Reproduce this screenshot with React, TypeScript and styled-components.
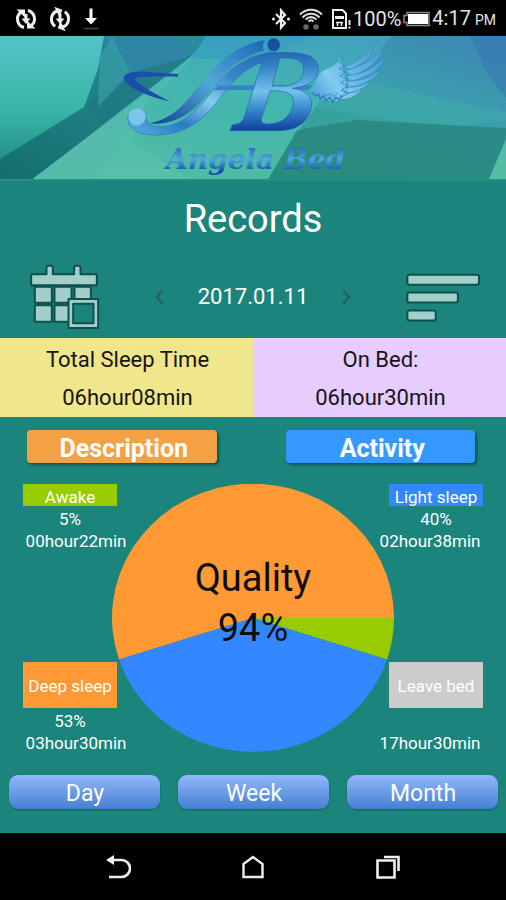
import React from "react";
import styled, { createGlobalStyle } from "styled-components";

const Global = createGlobalStyle`
  * { box-sizing: border-box; }
  body { margin: 0; background: #000; }
  h1, p, dl, dt, dd { margin: 0; font-weight: 400; }
  button { font: inherit; border: 0; padding: 0; background: none; cursor: pointer; }
  svg { display: block; }
`;

const Page = styled.div`
  min-height: 100vh;
  display: flex;
  flex-direction: column;
  background: #1b857c;
  color: #fff;
  font-family: Roboto, "Liberation Sans", sans-serif;
`;

const StatusBar = styled.header`
  display: flex;
  justify-content: space-between;
  align-items: center;
  height: 36px;
  padding: 2px 10px 0 14px;
  background: #000;
  color: #e4e4e4;
  font-size: 20px;
  line-height: 24px;
`;

const StatusGroup = styled.div<{ $gap: number }>`
  display: flex;
  align-items: center;
  gap: ${(p) => p.$gap}px;
`;

const Clock = styled.span`
  display: flex;
  align-items: baseline;
  gap: 4px;
`;

const Meridiem = styled.small`
  font-size: 14px;
`;

const Banner = styled.svg`
  width: 100%;
  height: auto;
`;

const Title = styled.h1`
  padding: 16px 0 15px;
  text-align: center;
  font-size: 38px;
  line-height: 44px;
`;

const Toolbar = styled.div`
  display: flex;
  align-items: center;
  justify-content: space-between;
  height: 82px;
  padding: 0 25px 0 29px;
`;

const IconButton = styled.button`
  display: flex;
  align-items: center;
  justify-content: center;
`;

const DatePicker = styled.div`
  display: flex;
  align-items: center;
  gap: 26px;
  font-size: 22px;
  line-height: 28px;
`;

const StepButton = styled(IconButton)`
  width: 24px;
  height: 32px;
`;

const Totals = styled.dl`
  display: grid;
  grid-template-columns: 1fr 1fr;
  color: #151515;
  font-size: 22px;
  line-height: 38px;
  text-align: center;
`;

const Total = styled.div<{ $color: string }>`
  padding: 3px 0 0 2px;
  background: ${(p) => p.$color};
`;

const Tabs = styled.div`
  display: grid;
  grid-template-columns: 1fr 1fr;
  gap: 69px;
  padding: 13px 31px 0 27px;
`;

const TabButton = styled.button<{ $color: string }>`
  height: 33px;
  padding: 4px 0 0 4px;
  border-radius: 4px;
  background: ${(p) => p.$color};
  box-shadow: 2px 2px 3px rgba(0, 40, 40, 0.55);
  color: #fff;
  font-size: 25px;
  font-weight: 700;
  line-height: 29px;
`;

const Chart = styled.section`
  display: grid;
  margin-top: 21px;
  padding: 0 23px;

  > * {
    grid-area: 1 / 1;
  }
`;

const Pie = styled.svg`
  justify-self: center;
  width: 282px;
  height: 268px;
`;

const Quality = styled.div`
  align-self: start;
  padding-top: 69px;
  text-align: center;
  color: #0c0c0c;
  font-size: 38px;
  line-height: 50px;
`;

const Legends = styled.div`
  display: grid;
  grid-template-columns: 106px 106px;
  justify-content: space-between;
  align-content: space-between;
`;

const Legend = styled.div<{ $side: "left" | "right" }>`
  display: flex;
  flex-direction: column;
  align-items: ${(p) => (p.$side === "left" ? "flex-start" : "flex-end")};
  font-size: 17px;
  line-height: 26px;
  text-align: center;
`;

const Swatch = styled.p<{ $color: string; $tall?: boolean }>`
  width: 94px;
  height: ${(p) => (p.$tall ? 46 : 22)}px;
  line-height: ${(p) => (p.$tall ? 48 : 26)}px;
  background: ${(p) => p.$color};
`;

const Percent = styled.p`
  width: 94px;
  height: 22px;
`;

const Duration = styled.p`
  width: 106px;
  height: 22px;
`;

const Periods = styled.div`
  display: grid;
  grid-template-columns: repeat(3, 1fr);
  gap: 18px;
  padding: 23px 8px 24px 9px;
`;

const PeriodButton = styled.button`
  height: 34px;
  padding: 4px 0 0 1px;
  border-radius: 9px;
  background: linear-gradient(#92b8fb, #4580d2);
  box-shadow: 0 1px 2px rgba(0, 40, 60, 0.4);
  color: #fff;
  font-size: 23px;
  line-height: 30px;
`;

const NavBar = styled.nav`
  display: grid;
  grid-template-columns: repeat(3, 1fr);
  align-items: center;
  height: 67px;
  margin-top: auto;
  padding: 0 51px;
  background: #000;
`;

const SyncIcon = ({ turn }: { turn: number }) => (
  <svg width="24" height="24" viewBox="0 0 24 24" fill="none" stroke="#eee" strokeWidth="3">
    <g transform={`rotate(${turn} 12 12)`}>
      <path d="M10 20.500a8.700 8.700 0 0 1-3.500-15" />
      <path d="M14 3.500a8.700 8.700 0 0 1 3.500 15" />
      <path d="M2.500 2.500h8.500v8z M21.500 21.500h-8.500v-8z" fill="#eee" stroke="none" />
    </g>
    <path d="M12 7v6" />
    <path d="M7.500 11.500h9L12 17z" fill="#eee" stroke="none" />
  </svg>
);

const DownloadIcon = () => (
  <svg width="18" height="24" viewBox="0 0 18 24">
    <path d="M7.500 1.500h3v9.500h4.500L9 17.500 3 11h4.500z" fill="#fff" />
    <path d="M1.500 21.500h15" stroke="#444" strokeWidth="1.500" />
  </svg>
);

const BluetoothIcon = () => (
  <svg width="20" height="24" viewBox="0 0 20 24" fill="none" stroke="#eee" strokeWidth="2.200">
    <path d="M5 7l9 9-4 4.500V3.500L14 8l-9 9" />
    <circle cx="2.500" cy="12" r="1.500" fill="#eee" stroke="none" />
    <circle cx="17.500" cy="12" r="1.500" fill="#eee" stroke="none" />
  </svg>
);

const WifiIcon = () => (
  <svg width="24" height="24" viewBox="0 0 24 24" fill="none" stroke="#ddd" strokeWidth="2">
    <path d="M1 7.500C7 1 17 1 23 7.500M3.500 10.500c5-5 12-5 17 0M6.500 12.500c3.500-3 7.500-3 11 0M9.500 14.500c1.500-1.500 3.500-1.500 5 0" />
    <circle cx="7" cy="20" r="2.800" fill="#666" stroke="none" />
    <circle cx="17" cy="20" r="2.800" fill="#666" stroke="none" />
  </svg>
);

const SimIcon = () => (
  <svg width="20" height="24" viewBox="0 0 20 24" fill="none" stroke="#eee" strokeWidth="2">
    <path d="M2 3h9.500L15 6.500V21H2z" />
    <path d="M4 10.500h9" strokeWidth="3" />
    <path d="M5 15.500h7M6.500 15v4M10.500 15v4" strokeWidth="1.500" />
    <path d="M18.500 13v5M18.500 19.500v2" />
  </svg>
);

const BatteryIcon = () => (
  <svg width="27" height="16" viewBox="0 0 27 16">
    <path d="M4 1.500h22v13H4v-3H1v-7h3z" fill="none" stroke="#8a8a8a" strokeWidth="1.500" />
    <path d="M5 3h20v10H5z" fill="#fff" />
  </svg>
);

const CalendarIcon = () => (
  <svg width="71" height="66" viewBox="88 42 212 198">
    <g fill="#a3cfcb" stroke="#0f4f4d" strokeWidth="6" strokeLinejoin="round">
      <path d="M94 73h46V53q0-6 6-6h7q6 0 6 6v20h64V53q0-6 6-6h7q6 0 6 6v20h49v33H94z" />
      <path d="M105 110h51v48h-51zM164 110h51v48h-51zM224 110h49v48h-49zM105 166h51v49h-51zM164 166h51v49h-51z" />
      <path d="M206 147h89v87h-89z" />
      <path d="M220 161h61v59h-61z" fill="#1b857c" />
    </g>
  </svg>
);

const SortIcon = () => (
  <svg width="75" height="49" viewBox="460 65 224 146">
    <g fill="#a3cfcb" stroke="#0f4f4d" strokeWidth="6">
      <rect x="464" y="70" width="214" height="30" rx="7" />
      <rect x="464" y="123" width="151" height="30" rx="7" />
      <rect x="464" y="177" width="85" height="30" rx="7" />
    </g>
  </svg>
);

const Chevron = ({ d }: { d: string }) => (
  <svg width="10" height="16" viewBox="0 0 10 16" fill="none" stroke="#2a5f60" strokeWidth="2.200">
    <path d={d} />
  </svg>
);

const BrandBanner = () => (
  <Banner viewBox="0 0 506 145" role="img" aria-label="Angela Bed">
    <defs>
      <linearGradient id="sky" x1="0" y1="0" x2="0" y2="1">
        <stop offset="0" stopColor="#55c2c8" />
        <stop offset="0.5" stopColor="#3ab6a6" />
        <stop offset="1" stopColor="#1b8279" />
      </linearGradient>
      <linearGradient id="shade" x1="0.8" y1="0" x2="0.1" y2="1">
        <stop offset="0" stopColor="#2b8a9c" />
        <stop offset="0.5" stopColor="#1f7f84" />
        <stop offset="1" stopColor="#14706c" />
      </linearGradient>
      <linearGradient id="mint" x1="0.8" y1="0" x2="0.3" y2="1">
        <stop offset="0" stopColor="#429fc0" />
        <stop offset="0.45" stopColor="#42b5b0" />
        <stop offset="1" stopColor="#50bca4" />
      </linearGradient>
      <linearGradient id="east" x1="0.9" y1="0" x2="0.3" y2="1">
        <stop offset="0" stopColor="#3b80b2" />
        <stop offset="0.45" stopColor="#389aa8" />
        <stop offset="1" stopColor="#2c9a88" />
      </linearGradient>
      <linearGradient id="metal" x1="0" y1="0" x2="0" y2="1">
        <stop offset="0" stopColor="#2468b4" />
        <stop offset="0.2" stopColor="#3787c8" />
        <stop offset="0.5" stopColor="#74c0ec" />
        <stop offset="0.7" stopColor="#3a90d0" />
        <stop offset="1" stopColor="#0f3f9c" />
      </linearGradient>
      <linearGradient id="swash" x1="1" y1="0" x2="0" y2="1">
        <stop offset="0" stopColor="#2468b4" />
        <stop offset="0.3" stopColor="#3787c8" />
        <stop offset="0.52" stopColor="#86cbee" />
        <stop offset="0.75" stopColor="#2b7bc4" />
        <stop offset="1" stopColor="#5eb0e6" />
      </linearGradient>
      <linearGradient id="thin" x1="1" y1="0" x2="0" y2="1">
        <stop offset="0" stopColor="#1e66b4" />
        <stop offset="0.5" stopColor="#52a8da" />
        <stop offset="1" stopColor="#123e94" />
      </linearGradient>
      <linearGradient
        id="wing"
        gradientUnits="userSpaceOnUse"
        x1="610"
        y1="190"
        x2="815"
        y2="50"
      >
        <stop offset="0" stopColor="#4a9fdc" />
        <stop offset="0.3" stopColor="#82cbf0" />
        <stop offset="0.6" stopColor="#62b4e2" />
        <stop offset="1" stopColor="#4d9bd0" />
      </linearGradient>
      <linearGradient id="word" x1="0" y1="0" x2="0" y2="1">
        <stop offset="0.1" stopColor="#2768b4" />
        <stop offset="0.5" stopColor="#4da6de" />
        <stop offset="0.85" stopColor="#1650a6" />
      </linearGradient>
    </defs>

    <path d="M0 0h506v145H0z" fill="url(#sky)" />
    <path d="M104 0h106l-18 20L30 145H0v-22l84-52 14-38z" fill="url(#shade)" />
    <path d="M104 0l26 37 61-17L175 0z" fill="#2f86a4" />
    <path d="M130 37l61-17-56 44-35 24-16-19z" fill="#1c7680" opacity="0.5" />
    <path d="M112 0l18 37-32 34 2-50z" fill="#3ba4ac" opacity="0.6" />
    <path d="M206 0h300v145H30l162-123z" fill="url(#mint)" />
    <path d="M192 22L120 98l-28 47H30z" fill="#5cbcb0" opacity="0.5" />
    <path d="M145 64l-53 81h100l-60-40z" fill="#6accb6" opacity="0.25" />
    <path d="M206 0h110l-60 24-64-2z" fill="#2f9ac6" opacity="0.5" />
    <path d="M392 0h114v145H267l30-48 30-42 40-26z" fill="url(#east)" opacity="0.75" />
    <path d="M470 0h36v62l-20-26z" fill="#3570ae" opacity="0.45" />
    <path d="M300 32l206 44v8l-60 8-130-20z" fill="#4db9ae" opacity="0.25" />
    <path d="M297 94l60-10 149 8v53H267z" fill="#237f75" opacity="0.65" />
    <path d="M506 103v42h-18z" fill="#55bca6" />
    <path d="M0 144h506" stroke="#248d84" strokeWidth="2" />

    <g transform="translate(110 -2) scale(0.3333)">
      <path
        d="M205 120L110 114C62 110 32 120 44 140C60 165 120 188 178 202C128 176 88 152 76 138C72 130 88 126 204 128Z"
        fill="#1a50aa"
      />
      <path
        d="M466 18C404 26 344 64 296 120C240 188 200 254 118 268C182 274 230 250 274 202C328 142 366 72 462 50C456 38 458 28 466 18Z"
        fill="url(#thin)"
      />
      <path
        d="M500 54C420 58 366 96 320 154C268 222 216 282 146 278C114 276 112 264 108 252C104 232 88 224 72 228C54 234 50 252 56 268C66 292 100 304 140 303C244 300 290 244 338 182C382 124 424 86 484 82Z"
        fill="url(#swash)"
        stroke="#2b72bc"
        strokeWidth="2"
      />
      <circle cx="81" cy="249" r="26" fill="#7cc6ee" />
      <path d="M326 154H610L594 168H312Z" fill="#3485c8" />
      <path
        fillRule="evenodd"
        d="M470 58C520 54 560 54 588 62C640 76 636 134 590 152C576 158 560 161 548 163C606 170 612 206 600 236C584 274 552 290 500 290H360L367 272C392 270 398 262 404 246L456 86C460 74 462 66 470 58ZM510 72L486 156H520C560 154 580 136 581 106C580 80 560 70 510 72ZM480 170L456 250C452 266 456 270 476 270C520 268 540 246 549 214C556 182 538 170 480 170Z"
        fill="url(#metal)"
        stroke="#2468b4"
        strokeWidth="2"
      />
      <circle cx="491" cy="32" r="19" fill="#1c4f9e" />

      <path
        d="M600 170C618 154 616 128 638 112C656 100 678 98 692 72C700 90 694 106 704 126C714 150 712 180 690 200C656 204 622 196 600 170Z"
        fill="url(#wing)"
      />
      <g fill="url(#wing)" stroke="#3a86c4" strokeWidth="2">
        <path d="M700 100C742 84 770 64 786 38C794 58 768 86 722 106Z" />
        <path d="M706 110C764 94 796 74 814 40C824 66 786 106 724 126Z" />
        <path d="M708 126C768 118 800 98 820 70C824 96 782 130 722 142Z" />
        <path d="M710 142C764 140 792 124 810 104C804 130 768 152 716 160Z" />
        <path d="M710 160C744 160 768 150 784 138C770 162 742 176 706 178Z" />
        <path d="M704 176C728 178 742 172 756 164C744 186 720 196 692 196Z" />
      </g>
      <path
        d="M606 176l12 10 8-6 4 14 12-8 6 14 12-10 8 14 10-14 10 8 6-16"
        fill="none"
        stroke="#2f76ba"
        strokeWidth="4"
        strokeLinejoin="round"
      />
      <path
        d="M692 66l10 10-14 8 16 10-16 10 20 10-18 12 22 8-20 12 22 10-20 12 22 10-22 12M640 180l12 6 10-8 10 10 12-12"
        fill="none"
        stroke="#3a8bc8"
        strokeWidth="3"
        strokeLinejoin="round"
      />
      <path
        d="M590 290C650 304 720 314 756 308C778 304 786 296 782 288"
        fill="none"
        stroke="#2f86a4"
        strokeWidth="3"
        strokeDasharray="22 3"
      />
    </g>
    <text
      x="166"
      y="133"
      fill="url(#word)"
      fontFamily="'DejaVu Serif', serif"
      fontSize="28"
      fontStyle="italic"
      fontWeight="700"
    >
      Angela Bed
    </text>
  </Banner>
);

type Phase = {
  name: string;
  percent?: string;
  time: string;
  color: string;
  side: "left" | "right";
  tall?: boolean;
};

const phases: Phase[] = [
  { name: "Awake", percent: "5%", time: "00hour22min", color: "#99cc00", side: "left" },
  { name: "Light sleep", percent: "40%", time: "02hour38min", color: "#3388ff", side: "right" },
  { name: "Deep sleep", percent: "53%", time: "03hour30min", color: "#ff9933", side: "left", tall: true },
  { name: "Leave bed", time: "17hour30min", color: "#cccccc", side: "right", tall: true },
];

export default function App() {
  return (
    <Page>
      <Global />
      <StatusBar>
        <StatusGroup $gap={10}>
          <SyncIcon turn={0} />
          <SyncIcon turn={20} />
          <DownloadIcon />
        </StatusGroup>
        <StatusGroup $gap={2}>
          <StatusGroup $gap={8}>
            <BluetoothIcon />
            <WifiIcon />
            <SimIcon />
          </StatusGroup>
          <span>100%</span>
          <BatteryIcon />
          <Clock>
            4:17 <Meridiem>PM</Meridiem>
          </Clock>
        </StatusGroup>
      </StatusBar>

      <BrandBanner />
      <Title>Records</Title>

      <Toolbar>
        <IconButton aria-label="Calendar">
          <CalendarIcon />
        </IconButton>
        <DatePicker>
          <StepButton aria-label="Previous day">
            <Chevron d="M8 1L2 8l6 7" />
          </StepButton>
          <time dateTime="2017-01-11">2017.01.11</time>
          <StepButton aria-label="Next day">
            <Chevron d="M2 1l6 7-6 7" />
          </StepButton>
        </DatePicker>
        <IconButton aria-label="List">
          <SortIcon />
        </IconButton>
      </Toolbar>

      <Totals>
        <Total $color="#f0e68c">
          <dt>Total Sleep Time</dt>
          <dd>06hour08min</dd>
        </Total>
        <Total $color="#e6ccff">
          <dt>On Bed:</dt>
          <dd>06hour30min</dd>
        </Total>
      </Totals>

      <Tabs>
        <TabButton $color="#f4a144">Description</TabButton>
        <TabButton $color="#3399ff">Activity</TabButton>
      </Tabs>

      <Chart>
        <Pie viewBox="0 0 282 268" aria-hidden="true">
          <path d="M7 175.400A141 134 0 1 1 282 134H141Z" fill="#ff9933" />
          <path d="M141 134H282A141 134 0 0 1 275 175.400Z" fill="#99cc00" />
          <path d="M141 134L275 175.400A141 134 0 0 1 7 175.400Z" fill="#3388ff" />
        </Pie>
        <Quality>
          <p>Quality</p>
          <p>94%</p>
        </Quality>
        <Legends>
          {phases.map((p) => (
            <Legend key={p.name} $side={p.side}>
              <Swatch $color={p.color} $tall={p.tall}>
                {p.name}
              </Swatch>
              <Percent>{p.percent}</Percent>
              <Duration>{p.time}</Duration>
            </Legend>
          ))}
        </Legends>
      </Chart>

      <Periods>
        <PeriodButton>Day</PeriodButton>
        <PeriodButton>Week</PeriodButton>
        <PeriodButton>Month</PeriodButton>
      </Periods>

      <NavBar>
        <IconButton aria-label="Back">
          <svg width="26" height="24" viewBox="0 0 26 24" fill="none" stroke="#eee" strokeWidth="2.600">
            <path d="M6 5h10.500a8 8 0 0 1 0 17H4" />
            <path d="M1 5L9 0v10z" fill="#eee" stroke="none" />
          </svg>
        </IconButton>
        <IconButton aria-label="Home">
          <svg width="24" height="24" viewBox="0 0 24 24" fill="none" stroke="#eee" strokeWidth="2.400">
            <path d="M2.500 9L12 2l9.500 7v13h-19z" />
          </svg>
        </IconButton>
        <IconButton aria-label="Recent apps">
          <svg width="26" height="24" viewBox="0 0 26 24" fill="none" stroke="#eee" strokeWidth="2.600">
            <path d="M2.500 5.500h17v17h-17z" />
            <path d="M9 2h14.500v14" />
          </svg>
        </IconButton>
      </NavBar>
    </Page>
  );
}
